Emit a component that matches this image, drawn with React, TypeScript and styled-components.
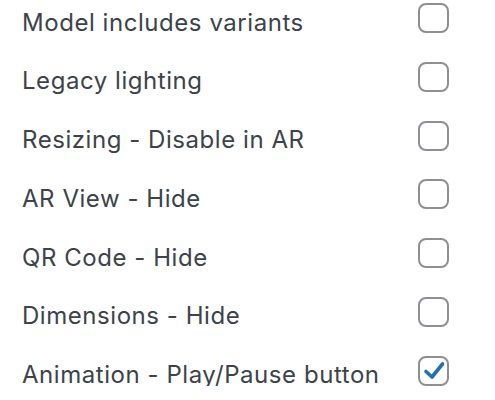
import React from "react";
import styled, { createGlobalStyle } from "styled-components";

const Global = createGlobalStyle`
  html, body { margin: 0; padding: 0; background: #fff; }
  body { font-family: Inter, "Noto Sans", sans-serif; }
`;

const List = styled.div`
  display: flex;
  flex-direction: column;
  gap: 28.8px;
  padding: 3px 0 0 22px;
  width: 427px;
`;

const Row = styled.label`
  display: flex;
  align-items: flex-start;
  justify-content: space-between;
  height: 30px;
`;

const Label = styled.span`
  font-size: 24px;
  color: #3c434a;
  letter-spacing: 0.55px;
  line-height: 30px;
  padding-top: 4.5px;
  white-space: nowrap;
`;

const Box = styled.span`
  box-sizing: border-box;
  width: 31px;
  height: 30px;
  border: 2px solid #8c8f94;
  border-radius: 8px;
  display: flex;
  align-items: center;
  justify-content: center;
  background: #fff;
`;

const items: { label: string; checked?: boolean }[] = [
  { label: "Model includes variants" },
  { label: "Legacy lighting" },
  { label: "Resizing - Disable in AR" },
  { label: "AR View - Hide" },
  { label: "QR Code - Hide" },
  { label: "Dimensions - Hide" },
  { label: "Animation - Play/Pause button", checked: true },
];

export default function App() {
  return (
    <>
      <Global />
      <List>
        {items.map((it) => (
          <Row key={it.label}>
            <Label>{it.label}</Label>
            <Box>
              {it.checked && (
                <svg width="24" height="22" viewBox="0 0 24 22">
                  <path d="M4 11.5 L10 17 L20.5 4" fill="none" stroke="#2271b1" strokeWidth="3.6" strokeLinecap="round" strokeLinejoin="round" />
                </svg>
              )}
            </Box>
          </Row>
        ))}
      </List>
    </>
  );
}
